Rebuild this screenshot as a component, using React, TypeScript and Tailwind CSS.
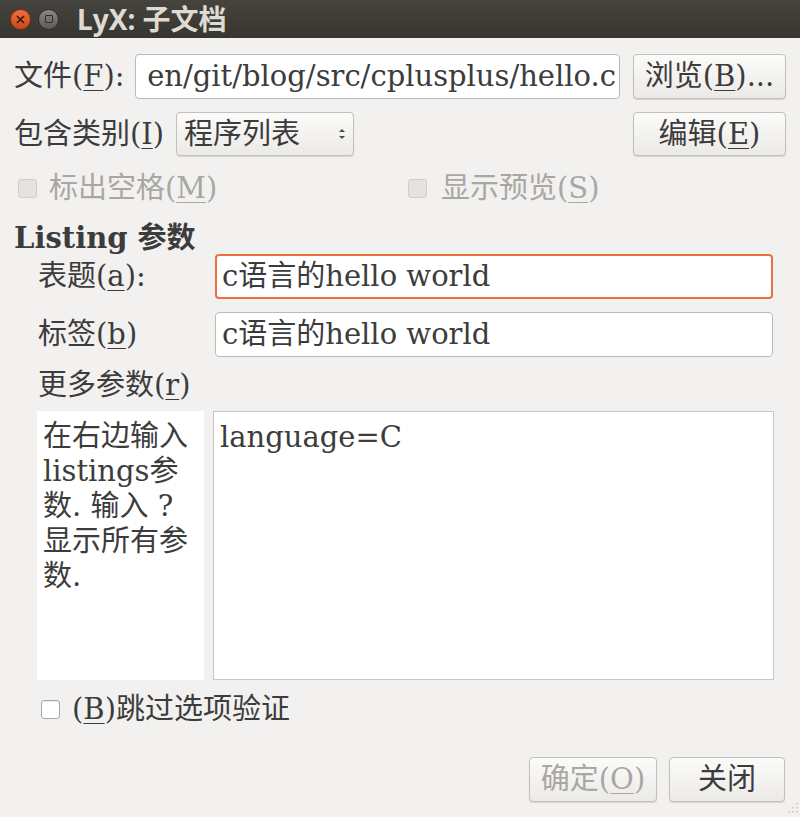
import React from "react";

const FONT = { fontFamily: '"DejaVu Serif", "Noto Sans CJK SC", serif' };

function U({ children }: { children: React.ReactNode }) {
  return <span className="underline underline-offset-[4px] decoration-1">{children}</span>;
}

function Button({
  children,
  className = "",
  disabled = false,
}: {
  children: React.ReactNode;
  className?: string;
  disabled?: boolean;
}) {
  return (
    <div
      className={`flex items-center justify-center whitespace-nowrap rounded-[4px] border border-[#c2c0bc] bg-gradient-to-b from-[#fbfbfa] to-[#eceae7] shadow-[0_1px_1px_rgba(0,0,0,0.12)] ${
        disabled ? "text-[#a9a7a4]" : "text-[#3c3c3c]"
      } ${className}`}
    >
      {children}
    </div>
  );
}

function Check({ disabled = false, className = "" }: { disabled?: boolean; className?: string }) {
  return (
    <div
      className={`shrink-0 w-[19px] h-[19px] rounded-[3px] border ${
        disabled ? "border-[#d0cecb] bg-[#e4e3e1]" : "border-[#a9a7a4] bg-white shadow-[inset_0_1px_1px_rgba(0,0,0,0.08)]"
      } ${className}`}
    />
  );
}

export default function App() {
  return (
    <div
      className="relative w-[800px] h-[817px] bg-[#f2f1f0] flex flex-col text-[29px] leading-[35px] text-[#3c3c3c] overflow-hidden"
      style={FONT}
    >
      {/* title bar */}
      <div className="h-[38px] shrink-0 bg-gradient-to-b from-[#45443f] to-[#36352f] flex items-center pl-[10px]">
        <div className="w-[21px] h-[21px] rounded-full bg-gradient-to-b from-[#f0703f] to-[#c8471a] flex items-center justify-center border border-[#7a2e12]">
          <svg width="9" height="9" viewBox="0 0 9 9">
            <path d="M1 1L8 8M8 1L1 8" stroke="#3b1a0c" strokeWidth="1.6" />
          </svg>
        </div>
        <div className="w-[21px] h-[21px] ml-[7px] rounded-full bg-gradient-to-b from-[#8a8985] to-[#5c5b57] flex items-center justify-center border border-[#2e2d2a]">
          <div className="w-[8px] h-[8px] border-[1.5px] border-[#2e2d2a] rounded-[1px]" />
        </div>
        <div
          className="ml-[18px] text-[#dfdbd2] text-[28px] leading-none font-bold"
          style={{ fontFamily: '"Noto Sans", "Noto Sans CJK SC", sans-serif' }}
        >
          LyX: 子文档
        </div>
      </div>

      <div className="flex flex-col px-[14px]">
        {/* file row */}
        <div className="mt-[16px] flex items-center h-[45px]">
          <div className="w-[121px] whitespace-nowrap">
            文件(<U>F</U>):
          </div>
          <div className="w-[485px] h-[45px] bg-white border border-[#bcbab6] rounded-[4px] flex items-center justify-end overflow-hidden whitespace-nowrap pr-[3px]">
            <span>en/git/blog/src/cplusplus/hello.c</span>
          </div>
          <Button className="ml-auto w-[153px] h-[45px]">
            浏览(<U>B</U>)...
          </Button>
        </div>

        {/* include type row */}
        <div className="mt-[13px] flex items-center h-[44px]">
          <div className="w-[162px] whitespace-nowrap">
            包含类别(<U>I</U>)
          </div>
          <Button className="w-[178px] h-[44px] !justify-between px-[7px]">
            <span>程序列表</span>
            <svg width="8" height="16" viewBox="0 0 8 16">
              <path d="M1 6L4 3L7 6Z" fill="#4a4a4a" />
              <path d="M1 10L4 13L7 10Z" fill="#4a4a4a" />
            </svg>
          </Button>
          <Button className="ml-auto w-[153px] h-[44px]">
            编辑(<U>E</U>)
          </Button>
        </div>

        {/* disabled checks */}
        <div className="mt-[18px] flex items-center h-[28px] text-[#a9a7a4] whitespace-nowrap">
          <div className="w-[394px] flex items-center">
            <Check disabled className="ml-[4px]" />
            <span className="ml-[12px]">
              标出空格(<U>M</U>)
            </span>
          </div>
          <Check disabled />
          <span className="ml-[14px]">
            显示预览(<U>S</U>)
          </span>
        </div>

        {/* section header */}
        <div className="mt-[21px] h-[30px] flex items-center font-bold text-[#3c3c3c] text-[29px]">Listing 参数</div>

        <div className="mt-[1px] flex items-center h-[45px]">
          <div className="w-[201px] pl-[24px] whitespace-nowrap">
            表题(<U>a</U>):
          </div>
          <div className="w-[558px] h-[45px] bg-white border-2 border-[#e9703f] rounded-[4px] flex items-center pl-[5px] whitespace-nowrap">
            c语言的hello world
          </div>
        </div>

        <div className="mt-[13px] flex items-center h-[45px]">
          <div className="w-[201px] pl-[24px] whitespace-nowrap">
            标签(<U>b</U>)
          </div>
          <div className="w-[558px] h-[45px] bg-white border border-[#bcbab6] rounded-[4px] flex items-center pl-[6px] whitespace-nowrap">
            c语言的hello world
          </div>
        </div>

        <div className="mt-[13px] h-[30px] flex items-center pl-[24px] whitespace-nowrap">
          更多参数(<U>r</U>)
        </div>

        <div className="mt-[11px] flex h-[269px]">
          <div className="ml-[23px] w-[167px] bg-white px-[6px] pt-[8px] whitespace-nowrap">
            在右边输入
            <br />
            listings参
            <br />
            数. 输入 ?
            <br />
            显示所有参
            <br />
            数.
          </div>
          <div className="ml-[9px] w-[561px] bg-white border border-[#c9c7c3] pl-[6px] pt-[8px]">
            language=C
          </div>
        </div>

        <div className="mt-[15px] flex items-center h-[28px] whitespace-nowrap">
          <Check className="ml-[27px]" />
          <span className="ml-[12px]">
            (<U>B</U>)跳过选项验证
          </span>
        </div>

        <div className="mt-[34px] flex items-center justify-end gap-[12px] pr-[1px]">
          <Button disabled className="w-[128px] h-[45px]">
            确定(<U>O</U>)
          </Button>
          <Button className="w-[116px] h-[45px]">关闭</Button>
        </div>
      </div>

      {/* resize grip */}
      <svg className="absolute right-[2px] bottom-[2px]" width="14" height="14" viewBox="0 0 14 14">
        {[
          [12, 2],
          [12, 6],
          [8, 6],
          [12, 10],
          [8, 10],
          [4, 10],
        ].map(([x, y], i) => (
          <rect key={i} x={x} y={y} width="1.5" height="1.5" fill="#c8c6c2" />
        ))}
      </svg>
    </div>
  );
}
